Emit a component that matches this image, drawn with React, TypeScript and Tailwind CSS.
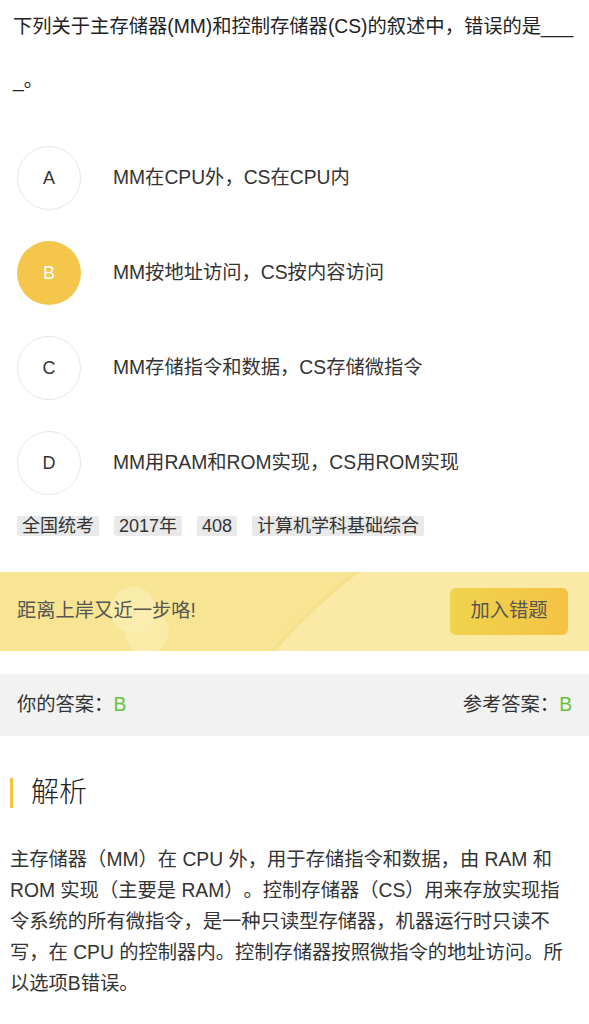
const options = [
  { key: 'A', text: 'MM在CPU外，CS在CPU内' },
  { key: 'B', text: 'MM按地址访问，CS按内容访问' },
  { key: 'C', text: 'MM存储指令和数据，CS存储微指令' },
  { key: 'D', text: 'MM用RAM和ROM实现，CS用ROM实现' },
];

const tags = ['全国统考', '2017年', '408', '计算机学科基础综合'];

const font = { fontFamily: '"Liberation Sans", "Noto Sans CJK SC", sans-serif' };

export default function App() {
  const selected = 'B';

  return (
    <div className="min-h-screen bg-white text-[#333] [text-spacing-trim:space-all]" style={font}>
      {/* 题目 */}
      <div className="px-[13px] text-[19.3px] leading-[54px] text-[#222]">
        下列关于主存储器(MM)和控制存储器(CS)的叙述中，错误的是___
        <br />
        _。
      </div>

      {/* 选项 */}
      <div className="mt-[38px] flex flex-col gap-[31px] pl-[17px]">
        {options.map((o) => (
          <div key={o.key} className="flex items-center gap-[32px]">
            <div
              className={
                o.key === selected
                  ? 'flex h-[64px] w-[64px] shrink-0 items-center justify-center rounded-full bg-[#f4c64b] text-[18px] text-white'
                  : 'flex h-[64px] w-[64px] shrink-0 items-center justify-center rounded-full border border-[#e6e6e6] text-[18px] text-[#333]'
              }
            >
              {o.key}
            </div>
            <span className="text-[19.3px] text-[#333]">{o.text}</span>
          </div>
        ))}
      </div>

      {/* 标签 */}
      <div className="mt-[21px] flex gap-[15px] pl-[17px]">
        {tags.map((t) => (
          <span key={t} className="rounded-[2px] bg-[#e9e9e9] px-[5px] text-[18px] leading-[20px] text-[#333]">
            {t}
          </span>
        ))}
      </div>

      {/* 加入错题 */}
      <div className="relative mt-[36px] flex h-[79px] items-center justify-between overflow-hidden bg-[#f8e594] pl-[17px] pr-[21px]">
        <div className="absolute left-[136px] top-[-114px] h-[1128px] w-[1128px] rounded-full bg-[#faeaa6] shadow-[0_0_0_4px_#f6e08b]" />
        <div className="absolute left-[110px] top-[15px] h-[46px] w-[46px] rounded-full bg-[#fbefb4]/70" />
        <div className="absolute left-[125px] top-[38px] h-[44px] w-[44px] rounded-full bg-[#fbefb4]/60" />
        <span className="relative text-[19.3px] text-[#555]">距离上岸又近一步咯!</span>
        <button className="relative flex h-[47px] w-[118px] items-center justify-center rounded-[6px] bg-gradient-to-r from-[#efd44c] to-[#f4c245] text-[19.3px] text-[#555]">
          加入错题
        </button>
      </div>

      {/* 答案 */}
      <div className="mt-[23px] flex h-[62px] items-center justify-between bg-[#f2f2f2] px-[17px] text-[19.3px] text-[#333]">
        <span>
          你的答案：<span className="text-[#67c23a]">B</span>
        </span>
        <span>
          参考答案：<span className="text-[#67c23a]">B</span>
        </span>
      </div>

      {/* 解析 */}
      <div className="mt-[36px] flex items-center gap-[18px] pl-[10px]">
        <div className="h-[30px] w-[3px] bg-[#f5c142]" />
        <span className="text-[28px] font-light text-[#222]">解析</span>
      </div>

      <p className="mt-[30px] pl-[10px] pr-[16px] text-[19.3px] leading-[31px] text-[#333]">
        主存储器（MM）在 CPU 外，用于存储指令和数据，由 RAM 和 ROM 实现（主要是 RAM）。控制存储器（CS）用来存放实现指令系统的所有微指令，是一种只读型存储器，机器运行时只读不写，在 CPU 的控制器内。控制存储器按照微指令的地址访问。所以选项B错误。
      </p>
    </div>
  );
}
